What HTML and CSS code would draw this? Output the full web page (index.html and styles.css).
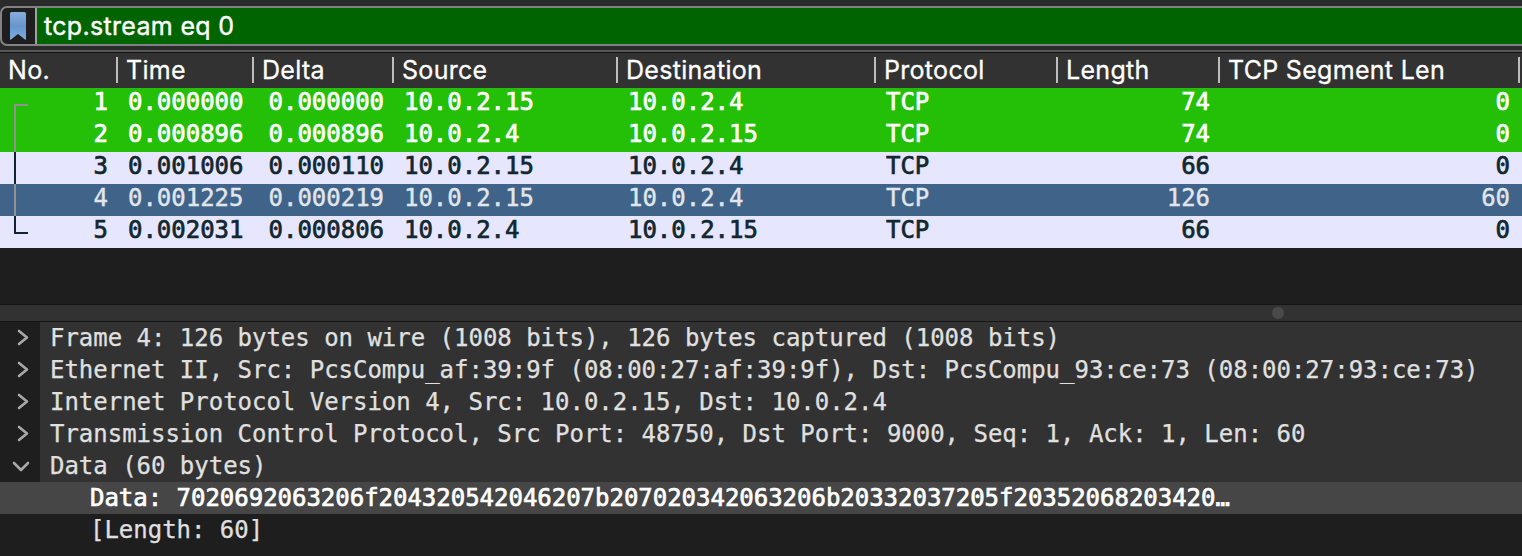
FILE: index.html
```
<!DOCTYPE html>
<html lang="en">
<head>
<meta charset="utf-8">
<title>Packet capture</title>
<link rel="stylesheet" href="styles.css">
</head>
<body>
<div class="app">
  <div class="filter">
    <div class="bookmark">
      <svg width="16" height="28" viewBox="0 0 16 28"><defs><linearGradient id="g" x1="0" y1="0" x2="0" y2="1"><stop offset="0" stop-color="#86addb"/><stop offset=".5" stop-color="#6796cd"/><stop offset="1" stop-color="#7eade2"/></linearGradient></defs><path d="M1.5 0H14.5Q16 0 16 1.5V27Q16 28 15 27.6L8 22L1 27.6Q0 28 0 27V1.5Q0 0 1.5 0Z" fill="url(#g)"/></svg>
    </div>
    <div class="query">tcp.stream eq 0</div>
  </div>
  <div class="cols head">
    <div>No.</div><div>Time</div><div>Delta</div><div>Source</div><div>Destination</div><div>Protocol</div><div>Length</div><div>TCP Segment Len</div>
  </div>
  <div class="packets">
    <div class="cols row syn"><div class="num">1</div><div>0.000000</div><div class="num">0.000000</div><div>10.0.2.15</div><div>10.0.2.4</div><div>TCP</div><div class="num">74</div><div class="num">0</div></div>
    <div class="cols row syn"><div class="num">2</div><div>0.000896</div><div class="num">0.000896</div><div>10.0.2.4</div><div>10.0.2.15</div><div>TCP</div><div class="num">74</div><div class="num">0</div></div>
    <div class="cols row tcp"><div class="num">3</div><div>0.001006</div><div class="num">0.000110</div><div>10.0.2.15</div><div>10.0.2.4</div><div>TCP</div><div class="num">66</div><div class="num">0</div></div>
    <div class="cols row sel"><div class="num">4</div><div>0.001225</div><div class="num">0.000219</div><div>10.0.2.15</div><div>10.0.2.4</div><div>TCP</div><div class="num">126</div><div class="num">60</div></div>
    <div class="cols row tcp"><div class="num">5</div><div>0.002031</div><div class="num">0.000806</div><div>10.0.2.4</div><div>10.0.2.15</div><div>TCP</div><div class="num">66</div><div class="num">0</div></div>
    <svg class="stream" width="28" height="160" viewBox="0 0 28 160" fill="none" stroke-width="2"><path d="M28 17H15V64M15 96V128" stroke="#929292"/><path d="M15 64V96M15 128V145H28" stroke="#12232b"/></svg>
  </div>
  <div class="splitter"><i class="grip"></i></div>
  <div class="tree">
    <div class="node"><div class="tog"><svg width="40" height="32" viewBox="0 0 40 32"><path d="M19 9L27 15.5L19 22"/></svg></div><div class="label">Frame 4: 126 bytes on wire (1008 bits), 126 bytes captured (1008 bits)</div></div>
    <div class="node"><div class="tog"><svg width="40" height="32" viewBox="0 0 40 32"><path d="M19 9L27 15.5L19 22"/></svg></div><div class="label">Ethernet II, Src: PcsCompu_af:39:9f (08:00:27:af:39:9f), Dst: PcsCompu_93:ce:73 (08:00:27:93:ce:73)</div></div>
    <div class="node"><div class="tog"><svg width="40" height="32" viewBox="0 0 40 32"><path d="M19 9L27 15.5L19 22"/></svg></div><div class="label">Internet Protocol Version 4, Src: 10.0.2.15, Dst: 10.0.2.4</div></div>
    <div class="node"><div class="tog"><svg width="40" height="32" viewBox="0 0 40 32"><path d="M19 9L27 15.5L19 22"/></svg></div><div class="label">Transmission Control Protocol, Src Port: 48750, Dst Port: 9000, Seq: 1, Ack: 1, Len: 60</div></div>
    <div class="node"><div class="tog"><svg width="40" height="32" viewBox="0 0 40 32"><path d="M14 13L21 20L28 13"/></svg></div><div class="label">Data (60 bytes)</div></div>
    <div class="leaf active">Data: 7020692063206f204320542046207b207020342063206b20332037205f20352068203420…</div>
    <div class="leaf">[Length: 60]</div>
  </div>
</div>
</body>
</html>
```
FILE: styles.css
```
* { box-sizing: border-box; }
body { margin: 0; background: #1e1e1e; }
.app { width: 1522px; height: 556px; overflow: hidden; background: linear-gradient(#2a2a2a 0 50px, #1e1e1e 50px); display: flex; flex-direction: column; }
.app > * { flex-shrink: 0; }
.filter { height: 40px; margin: 6px -10px 4px 0; border: 2px solid #828282; border-radius: 7px; display: flex; background: #1e1e1e; }
.bookmark { width: 35px; padding: 4px 0 0 8px; border-right: 2px solid #a0a0a0; }
.bookmark svg { display: block; }
.query { flex: 1; background: #006400; color: #fff; padding-left: 7px; font: 25px/36px Inter, sans-serif; letter-spacing: 0.32px; -webkit-text-stroke: 0.4px currentColor; }
.cols { display: grid; grid-template-columns: 118px 136px 140px 224px 258px 182px 162px 300px; }
.head { height: 38px; border-top: 2px solid #565656; box-shadow: inset 0 1px #111; background: #323232; color: #fff; font: 25px/34px Inter, sans-serif; letter-spacing: 0.3px; -webkit-text-stroke: 0.3px currentColor; padding-top: 1px; }
.head > div { padding-left: 8px; white-space: nowrap; background: linear-gradient(#bdbdbd, #bdbdbd) right 4px / 2px 26px no-repeat; }
.packets { position: relative; height: 216px; }
.row { height: 32px; font: 24px/28px "DejaVu Sans Mono", monospace; letter-spacing: -0.02px; -webkit-text-stroke: 0.7px currentColor; }
.row > div { padding-left: 10px; }
.row > .num { text-align: right; padding: 0 10px 0 0; }
.syn { background: #24bf07; color: #fff; }
.tcp { background: #e6e6ff; color: #12272e; }
.sel { background: #40638a; color: #e2e6ea; -webkit-text-stroke-width: 0.4px; }
.stream { position: absolute; left: 0; top: 0; }
.splitter { height: 18px; border: solid #151515; border-width: 1px 0; background: #323232; display: flex; justify-content: flex-end; padding: 2px 238px 0 0; }
.grip { width: 12px; height: 12px; border-radius: 50%; background: #4a4a4a; }
.tree { font: 24px/32px "DejaVu Sans Mono", monospace; letter-spacing: -0.02px; color: #e0e0e0; white-space: nowrap; -webkit-text-stroke: 0.25px currentColor; }
.node { display: flex; height: 32px; background: #323232; }
.tog { width: 40px; background: #1e1e1e; }
.tog svg { display: block; fill: none; stroke: #a8a8a8; stroke-width: 2.6; stroke-linecap: round; stroke-linejoin: round; }
.label { padding-left: 10px; }
.leaf { height: 32px; padding-left: 90px; }
.active { background: #464646; color: #fff; -webkit-text-stroke-width: 0.7px; }
```
